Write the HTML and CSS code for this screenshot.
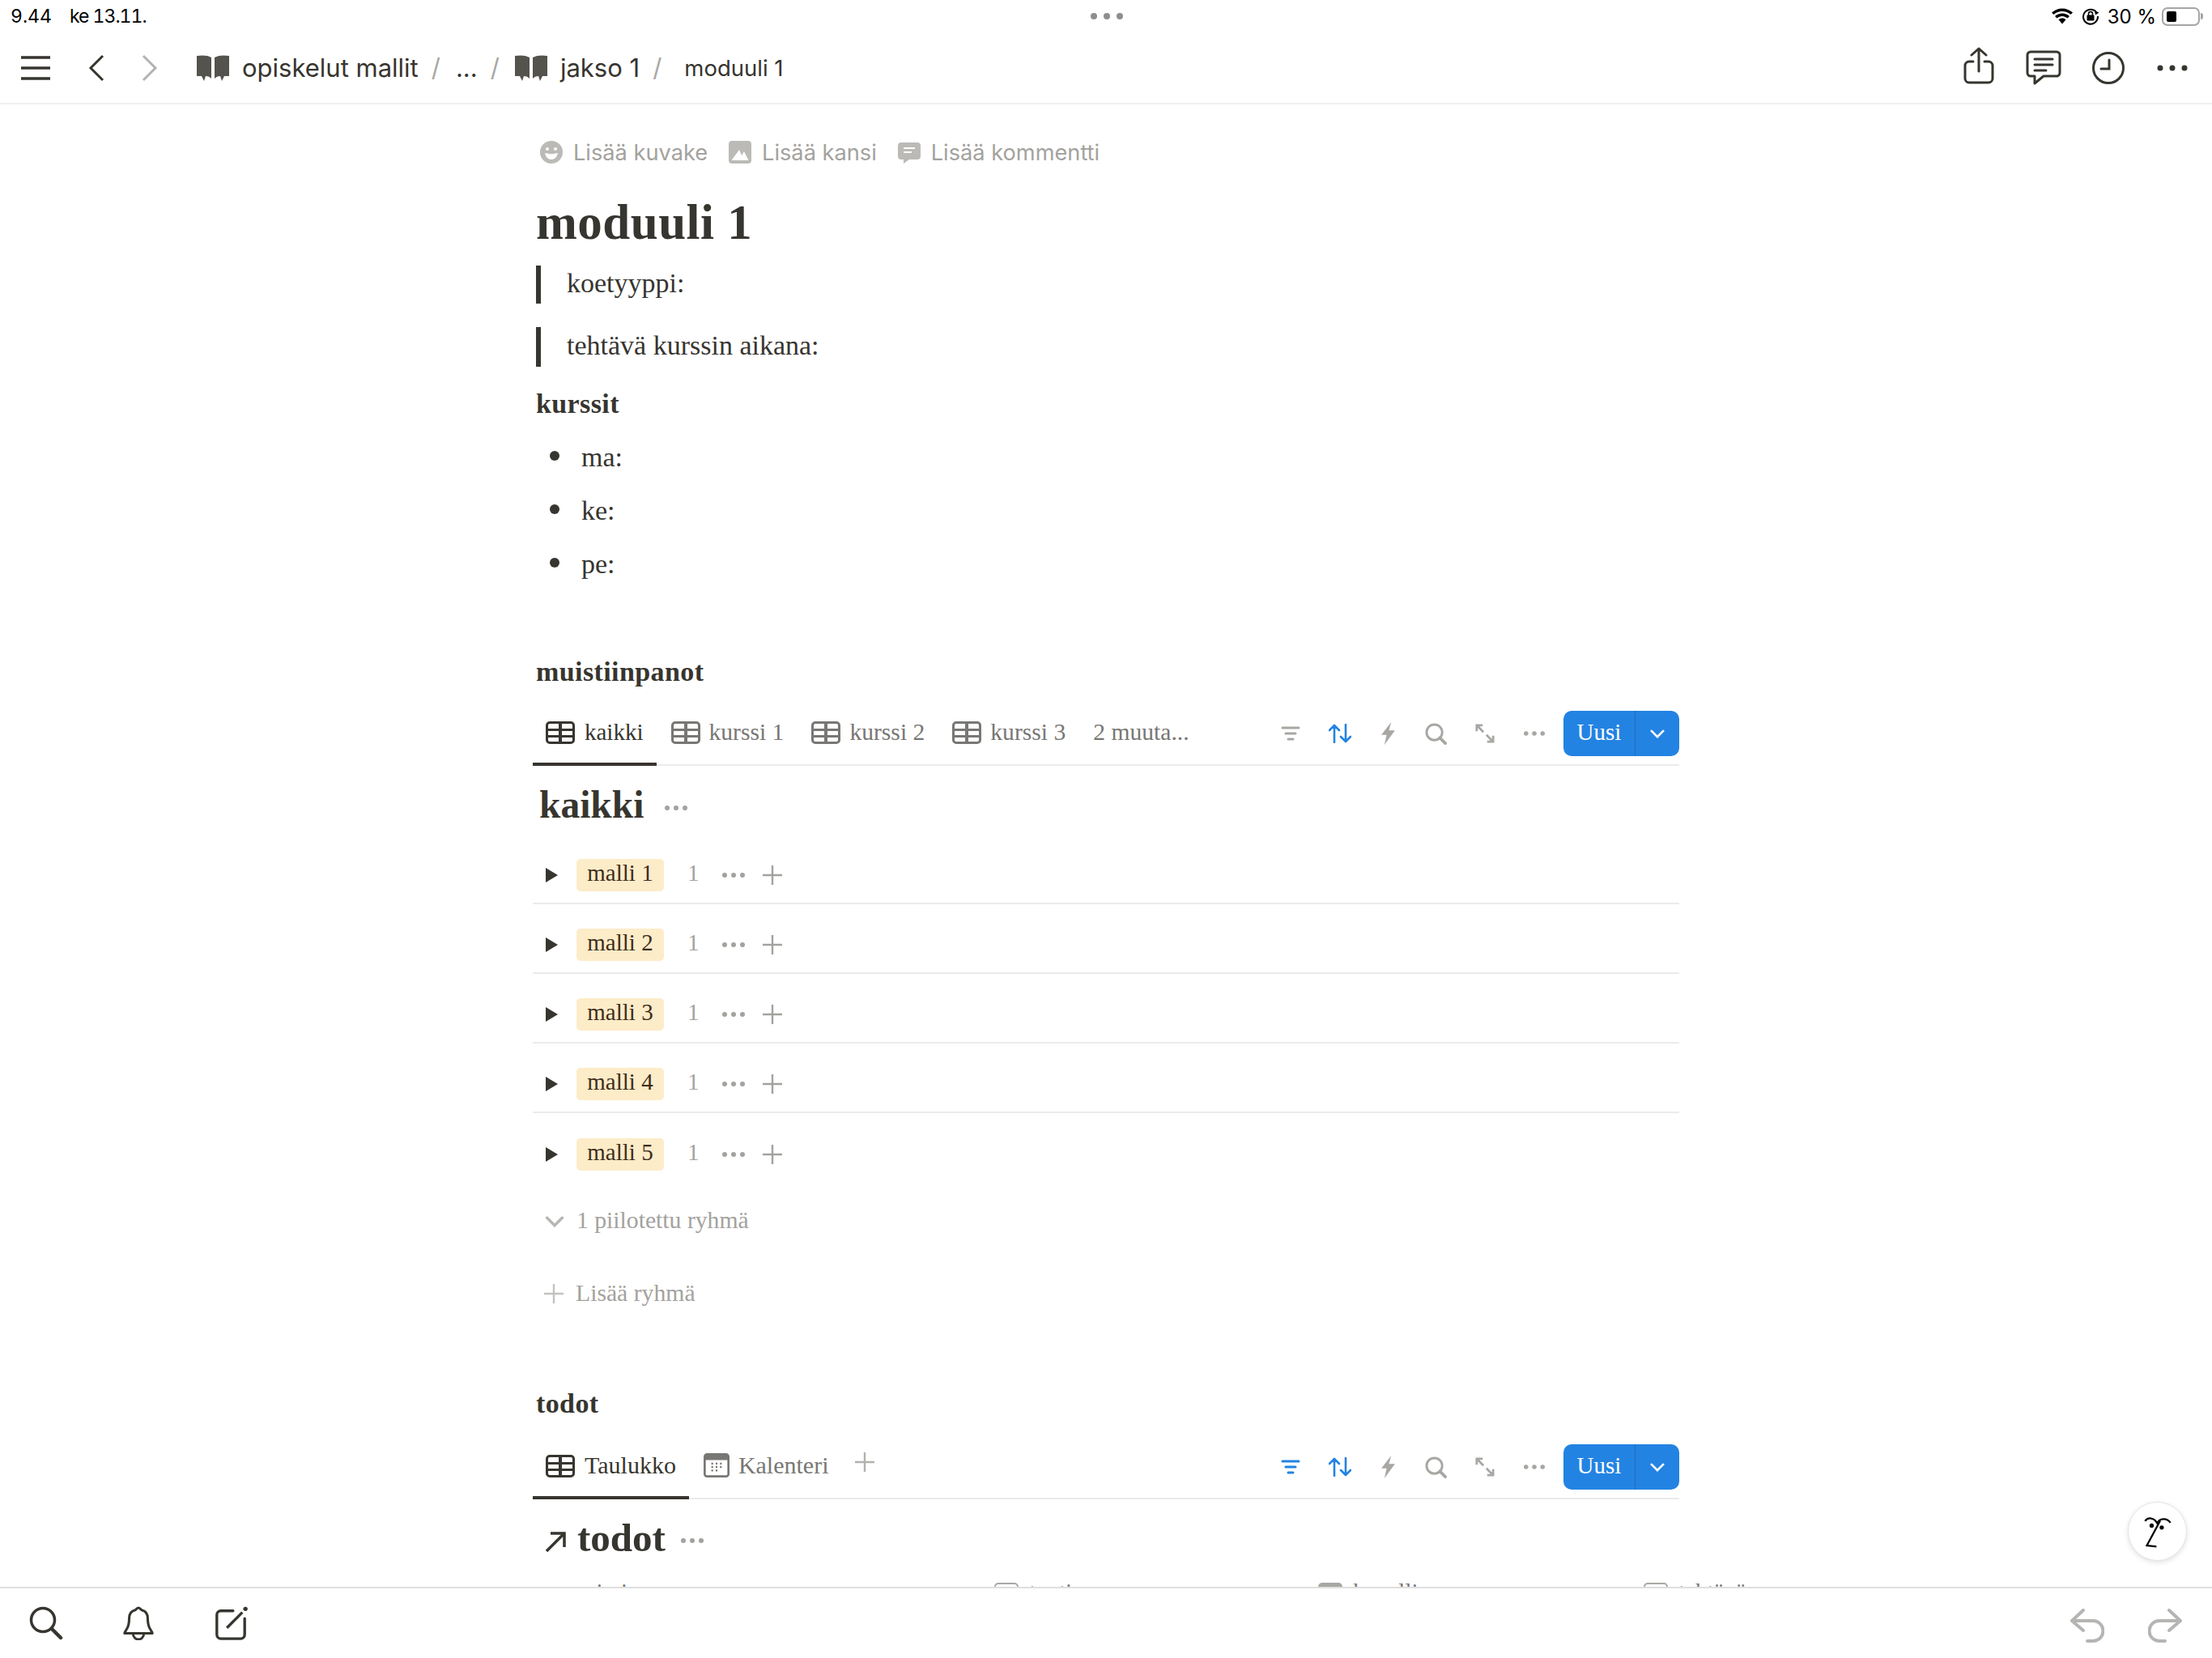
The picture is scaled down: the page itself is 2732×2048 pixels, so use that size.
FILE: index.html
```html
<!DOCTYPE html>
<html>
<head>
  <title>moduuli 1</title>
  <link rel="stylesheet" href="styles.css">
</head>
<body>
  <svg class="defs" xmlns="http://www.w3.org/2000/svg">
    <symbol id="table" viewBox="0 0 36 28">
      <path fill-rule="evenodd" d="M5 0h26a5 5 0 0 1 5 5v18a5 5 0 0 1-5 5H5a5 5 0 0 1-5-5V5a5 5 0 0 1 5-5zM3 9h13V3H5a2 2 0 0 0-2 2zm17 0h13V5a2 2 0 0 0-2-2H20zM3 12v5h13v-5zm17 0v5h13v-5zM3 20v3a2 2 0 0 0 2 2h11v-5zm17 0v5h11a2 2 0 0 0 2-2v-3z"/>
    </symbol>
    <symbol id="dots" viewBox="0 0 28 6">
      <circle cx="3" cy="3" r="3"/><circle cx="14" cy="3" r="3"/><circle cx="25" cy="3" r="3"/>
    </symbol>
    <symbol id="plus" viewBox="0 0 24 24">
      <path d="M12 0v24M0 12h24" fill="none" stroke="currentColor" stroke-width="2.4"/>
    </symbol>
    <symbol id="book" viewBox="0 0 40 32">
      <path d="M0 1c6-1 13-1 18 2v26c-2-2-4-3-7-3l-2 6-3-6H0zM40 1c-6-1-13-1-18 2v26c2-2 4-3 7-3l2 6 3-6h6z"/>
    </symbol>
    <symbol id="filter" viewBox="0 0 24 18">
      <path d="M2 2h20M6 9h12M9 16h6" fill="none" stroke="currentColor" stroke-width="3" stroke-linecap="round"/>
    </symbol>
    <symbol id="sort" viewBox="0 0 28 24">
      <path d="M7 23V2M1 8l6-6 6 6M21 1v21M15 16l6 6 6-6" fill="none" stroke="currentColor" stroke-width="2.6" stroke-linecap="round" stroke-linejoin="round"/>
    </symbol>
    <symbol id="bolt" viewBox="0 0 18 30">
      <path d="M13 0 0 17h7L4 30l14-19h-8z"/>
    </symbol>
    <symbol id="find" viewBox="0 0 28 28">
      <circle cx="12" cy="12" r="10" fill="none" stroke="currentColor" stroke-width="3"/>
      <path d="m19 19 7 7" fill="none" stroke="currentColor" stroke-width="4" stroke-linecap="round"/>
    </symbol>
    <symbol id="expand" viewBox="0 0 26 26">
      <path d="M2 10V2h8M2 2l9 9M24 16v8h-8M24 24l-9-9" fill="none" stroke="currentColor" stroke-width="3"/>
    </symbol>
    <symbol id="chev" viewBox="0 0 20 12">
      <path d="m2 2 8 8 8-8" fill="none" stroke="currentColor" stroke-width="3" stroke-linecap="round"/>
    </symbol>
  </svg>

  <div class="app">
    <div class="statusbar">
      <div class="status-time"><span>9.44</span><span class="status-date">ke 13.11.</span></div>
      <svg class="status-dots" viewBox="0 0 40 8" fill="#8e8e8e"><circle cx="4" cy="4" r="4"/><circle cx="20" cy="4" r="4"/><circle cx="36" cy="4" r="4"/></svg>
      <div class="status-right">
        <svg class="ic-wifi" viewBox="0 0 28 20"><path d="M14 4c4 0 7.5 1.5 10.500 4L27 5.500C23.500 2.500 19 .5 14 .5S4.500 2.500 1 5.500L3.500 8C6.500 5.500 10 4 14 4z"/><path d="M14 10c2.500 0 4.500 1 6.500 2.500L23 10c-2.500-2-5.500-3.500-9-3.500S7.500 8 5 10l2.500 2.500C9.500 11 11.500 10 14 10z"/><path d="M14 12.500c-1.800 0-3.200.6-4.500 1.700L14 19.500l4.500-5.300c-1.300-1.100-2.700-1.700-4.500-1.700z"/></svg>
        <svg class="ic-lock" viewBox="0 0 22 22"><path d="M19 7.500A9 9 0 1 0 20 11" fill="none" stroke="#000" stroke-width="2"/><path d="m21.500 6.500-4.500 3-1-5z"/><rect x="6.500" y="9.500" width="9" height="7" rx="1"/><path d="M8.500 10V8a2.500 2.500 0 0 1 5 0v2" fill="none" stroke="#000" stroke-width="1.500"/></svg>
        <span>30 %</span>
        <div class="battery"><div class="battery-fill"></div></div>
        <div class="battery-nub"></div>
      </div>
    </div>

    <header class="topbar">
      <svg class="ic-menu" viewBox="0 0 36 30"><path d="M0 2h36M0 15h36M0 28h36" stroke="#37352f" stroke-width="3.5"/></svg>
      <svg class="ic-nav" viewBox="0 0 20 34"><path d="M18 2 3 17l15 15" fill="none" stroke="#37352f" stroke-width="3"/></svg>
      <svg class="ic-nav ic-nav-off" viewBox="0 0 20 34"><path d="m2 2 15 15L2 32" fill="none" stroke="#b4b3b0" stroke-width="3"/></svg>
      <nav class="crumbs">
        <svg class="ic-book"><use href="#book"/></svg>
        <span class="crumb">opiskelut mallit</span>
        <span class="sep">/</span>
        <span class="crumb">...</span>
        <span class="sep">/</span>
        <svg class="ic-book"><use href="#book"/></svg>
        <span class="crumb">jakso 1</span>
        <span class="sep">/</span>
        <span class="crumb crumb-last">moduuli 1</span>
      </nav>
      <div class="top-actions">
        <svg class="ic-share" viewBox="0 0 38 46"><path d="M12 18H7a5 5 0 0 0-5 5v16a5 5 0 0 0 5 5h24a5 5 0 0 0 5-5V23a5 5 0 0 0-5-5h-5M19 30V2M10 10l9-8 9 8" fill="none" stroke="#37352f" stroke-width="3" stroke-linecap="round" stroke-linejoin="round"/></svg>
        <svg class="ic-comment" viewBox="0 0 44 44"><path d="M6 2h32a4 4 0 0 1 4 4v22a4 4 0 0 1-4 4H22l-11 9v-9H6a4 4 0 0 1-4-4V6a4 4 0 0 1 4-4z" fill="none" stroke="#37352f" stroke-width="3" stroke-linejoin="round"/><path d="M11 11h22M11 18h22M11 25h14" stroke="#37352f" stroke-width="3" stroke-linecap="round"/></svg>
        <svg class="ic-clock" viewBox="0 0 40 40"><circle cx="20" cy="20" r="18.5" fill="none" stroke="#37352f" stroke-width="3"/><path d="M21 10v11h-10" fill="none" stroke="#37352f" stroke-width="3" stroke-linecap="round"/></svg>
        <svg class="ic-more" fill="#37352f" viewBox="0 0 38 8"><circle cx="4" cy="4" r="3.5"/><circle cx="19" cy="4" r="3.5"/><circle cx="34" cy="4" r="3.5"/></svg>
      </div>
    </header>

    <main class="page">
      <div class="content">
        <div class="page-actions">
          <span class="page-action">
            <svg class="ic-action" viewBox="0 0 28 28"><path fill-rule="evenodd" d="M14 0a14 14 0 1 1 0 28 14 14 0 0 1 0-28zM9 8a2 2 0 1 0 0 4 2 2 0 0 0 0-4zm10 0a2 2 0 1 0 0 4 2 2 0 0 0 0-4zM6 15c1 5 4 8 8 8s7-3 8-8c-5 1.500-11 1.500-16 0z"/></svg>
            Lisää kuvake
          </span>
          <span class="page-action">
            <svg class="ic-action" viewBox="0 0 28 28"><path fill-rule="evenodd" d="M4 0h20a4 4 0 0 1 4 4v20a4 4 0 0 1-4 4H4a4 4 0 0 1-4-4V4a4 4 0 0 1 4-4zm-.5 24h21L19 13l-3 5-3-7z"/></svg>
            Lisää kansi
          </span>
          <span class="page-action">
            <svg class="ic-action" viewBox="0 0 28 28"><path fill-rule="evenodd" d="M4 2h20a4 4 0 0 1 4 4v13a4 4 0 0 1-4 4H14l-7 5v-5H4a4 4 0 0 1-4-4V6a4 4 0 0 1 4-4zm3 6v2h14V8zm0 5v2h10v-2z"/></svg>
            Lisää kommentti
          </span>
        </div>

        <h1 class="page-title">moduuli 1</h1>

        <div class="quote quote-first">koetyyppi:</div>
        <div class="quote quote-second">tehtävä kurssin aikana:</div>

        <h3 class="sub kurssit">kurssit</h3>
        <ul class="bullets">
          <li>ma:</li>
          <li>ke:</li>
          <li>pe:</li>
        </ul>

        <h3 class="sub notes">muistiinpanot</h3>
        <div class="tabs">
          <div class="tab active"><svg class="ic-table"><use href="#table"/></svg>kaikki</div>
          <div class="tab"><svg class="ic-table"><use href="#table"/></svg>kurssi 1</div>
          <div class="tab"><svg class="ic-table"><use href="#table"/></svg>kurssi 2</div>
          <div class="tab"><svg class="ic-table"><use href="#table"/></svg>kurssi 3</div>
          <div class="tab">2 muuta...</div>
          <div class="tools">
            <svg class="tool-filter"><use href="#filter"/></svg>
            <svg class="tool-sort"><use href="#sort"/></svg>
            <svg class="tool-bolt"><use href="#bolt"/></svg>
            <svg class="tool-find"><use href="#find"/></svg>
            <svg class="tool-expand"><use href="#expand"/></svg>
            <svg class="tool-dots"><use href="#dots"/></svg>
            <div class="new-btn"><span class="new-label">Uusi</span><span class="new-arrow"><svg class="ic-chev"><use href="#chev"/></svg></span></div>
          </div>
        </div>

        <div class="db-title">kaikki <svg class="title-dots"><use href="#dots"/></svg></div>

        <div class="groups">
          <div class="group">
            <span class="caret"></span><span class="pill">malli 1</span><span class="count">1</span>
            <svg class="group-dots"><use href="#dots"/></svg><svg class="group-plus"><use href="#plus"/></svg>
          </div>
          <div class="group">
            <span class="caret"></span><span class="pill">malli 2</span><span class="count">1</span>
            <svg class="group-dots"><use href="#dots"/></svg><svg class="group-plus"><use href="#plus"/></svg>
          </div>
          <div class="group">
            <span class="caret"></span><span class="pill">malli 3</span><span class="count">1</span>
            <svg class="group-dots"><use href="#dots"/></svg><svg class="group-plus"><use href="#plus"/></svg>
          </div>
          <div class="group">
            <span class="caret"></span><span class="pill">malli 4</span><span class="count">1</span>
            <svg class="group-dots"><use href="#dots"/></svg><svg class="group-plus"><use href="#plus"/></svg>
          </div>
          <div class="group">
            <span class="caret"></span><span class="pill">malli 5</span><span class="count">1</span>
            <svg class="group-dots"><use href="#dots"/></svg><svg class="group-plus"><use href="#plus"/></svg>
          </div>
        </div>

        <div class="muted-row hidden-groups"><svg class="ic-chev-muted"><use href="#chev"/></svg>1 piilotettu ryhmä</div>
        <div class="muted-row add-group"><svg class="ic-plus-muted"><use href="#plus"/></svg>Lisää ryhmä</div>

        <h3 class="sub todot">todot</h3>
        <div class="tabs tabs-todot">
          <div class="tab active"><svg class="ic-table"><use href="#table"/></svg>Taulukko</div>
          <div class="tab">
            <svg class="ic-cal" viewBox="0 0 30 28" fill="#787774"><path fill-rule="evenodd" d="M4 0h22a4 4 0 0 1 4 4v20a4 4 0 0 1-4 4H4a4 4 0 0 1-4-4V4a4 4 0 0 1 4-4zM2.500 8v16A1.500 1.500 0 0 0 4 25.500h22a1.500 1.500 0 0 0 1.500-1.500V8z"/><path d="M9 11h2v2H9zm5 0h2v2h-2zm5 0h2v2h-2zm-10 4h2v2H9zm5 0h2v2h-2zm5 0h2v2h-2zM9 19h2v2H9zm5 0h2v2h-2z"/></svg>
            Kalenteri
          </div>
          <svg class="tab-plus"><use href="#plus"/></svg>
          <div class="tools">
            <svg class="tool-filter tool-on"><use href="#filter"/></svg>
            <svg class="tool-sort"><use href="#sort"/></svg>
            <svg class="tool-bolt"><use href="#bolt"/></svg>
            <svg class="tool-find"><use href="#find"/></svg>
            <svg class="tool-expand"><use href="#expand"/></svg>
            <svg class="tool-dots"><use href="#dots"/></svg>
            <div class="new-btn"><span class="new-label">Uusi</span><span class="new-arrow"><svg class="ic-chev"><use href="#chev"/></svg></span></div>
          </div>
        </div>

        <div class="db-title db-title-todot">
          <svg class="ic-link" viewBox="0 0 28 28"><path d="M3 26 25 4M8 4h17v17" fill="none" stroke="#37352f" stroke-width="3.5"/></svg>
          todot <svg class="title-dots"><use href="#dots"/></svg>
        </div>

        <div class="table-head">
          <span class="col col-name"><span class="col-aa">Aa</span>nimi</span>
          <span class="col col-type"><span class="col-box col-box-line"></span>tunti</span>
          <span class="col col-date"><span class="col-box"></span>kuvallinen</span>
          <span class="col col-state"><span class="col-box col-box-line"></span>tehtävä</span>
        </div>
      </div>
      <button class="pencil">
        <svg viewBox="140 92 116 128"><path d="M150 116c10-15 34-15 46 8 10-21 36-21 50-2" fill="none" stroke="#000" stroke-width="7"/><path d="m207 115-50 93 36 4" fill="none" stroke="#000" stroke-width="7"/><circle cx="175" cy="133" r="8"/><circle cx="213" cy="140" r="8"/></svg>
      </button>
    </main>

    <footer class="bottombar">
      <svg class="ic-bottom" viewBox="0 0 42 42"><circle cx="17" cy="17" r="14.5" fill="none" stroke="#37352f" stroke-width="3.5"/><path d="m28 28 11 11" stroke="#37352f" stroke-width="4.5" stroke-linecap="round"/></svg>
      <svg class="ic-bottom" viewBox="0 0 42 44"><path d="M21 2c-2 0-3 2-4 3-5 1-8 5-8 11 0 8-1 11-4 15-1 2-2 3-2 4h36c0-1-1-2-2-4-3-4-4-7-4-15 0-6-3-10-8-11-1-1-2-3-4-3z" fill="none" stroke="#37352f" stroke-width="3.2" stroke-linejoin="round"/><path d="M14 36a7 7 0 0 0 14 0" fill="none" stroke="#37352f" stroke-width="3"/></svg>
      <svg class="ic-bottom" viewBox="0 0 42 44"><path d="M24 6H8a5 5 0 0 0-5 5v26a5 5 0 0 0 5 5h26a5 5 0 0 0 5-5V16" fill="none" stroke="#37352f" stroke-width="3.5" stroke-linecap="round"/><path d="m16 28 20-20" stroke="#37352f" stroke-width="3.5"/><circle cx="40" cy="3.5" r="2.8" fill="#37352f"/></svg>
      <div class="history">
        <svg class="ic-history" viewBox="0 0 42 42"><path d="M16 2 2 15l14 12M2 15h26a12 12 0 0 1 0 25h-7" fill="none" stroke="#b5b5b3" stroke-width="4" stroke-linecap="round" stroke-linejoin="round"/></svg>
        <svg class="ic-history" viewBox="0 0 42 42"><path d="m26 2 14 13-14 12M40 15H14a12 12 0 0 0 0 25h7" fill="none" stroke="#b5b5b3" stroke-width="4" stroke-linecap="round" stroke-linejoin="round"/></svg>
      </div>
    </footer>
  </div>
</body>
</html>
```

FILE: styles.css
```css
:root {
  --text: #37352f;
  --text-mid: #787774;
  --text-light: #a3a29e;
  --icon-light: #b2b1ad;
  --line: #ebebea;
  --blue: #2383e2;
  --serif: 'Liberation Serif', serif;
  --sans: 'Inter', 'Liberation Sans', sans-serif;
}

* {
  box-sizing: border-box;
  margin: 0;
  padding: 0;
}

body {
  width: 2732px;
  height: 2048px;
  overflow: hidden;
  background: #fff;
  color: var(--text);
  font-family: var(--serif);
}

.defs {
  display: none;
}

.app {
  display: flex;
  flex-direction: column;
  height: 2048px;
}

svg {
  display: block;
  flex: none;
}

/* Status bar */
.statusbar {
  height: 40px;
  display: flex;
  align-items: center;
  justify-content: space-between;
  padding: 0 11px 0 13px;
  color: #000;
  font-family: var(--sans);
  font-size: 23px;
}

.status-time {
  display: flex;
  gap: 22px;
  width: 800px;
  font-variant-numeric: tabular-nums;
}

.status-date {
  letter-spacing: -1px;
}

.status-dots {
  width: 40px;
  height: 8px;
}

.status-right {
  display: flex;
  align-items: center;
  justify-content: flex-end;
  width: 800px;
  font-size: 24px;
}

.ic-wifi {
  width: 28px;
  height: 20px;
  margin-right: 10px;
}

.ic-lock {
  width: 22px;
  height: 22px;
  margin-right: 10px;
}

.battery {
  width: 47px;
  height: 23px;
  margin-left: 7px;
  padding: 3px 4px;
  border: 2px solid #a5a5a5;
  border-radius: 7px;
}

.battery-fill {
  width: 12px;
  height: 13px;
  background: #000;
  border-radius: 2px;
}

.battery-nub {
  width: 3px;
  height: 8px;
  margin-left: 1px;
  background: #a5a5a5;
  border-radius: 0 3px 3px 0;
}

/* Top bar */
.topbar {
  height: 89px;
  display: flex;
  align-items: center;
  padding: 0 30px 0 26px;
  border-bottom: 2px solid #f0f0ef;
}

.ic-menu {
  width: 36px;
  height: 30px;
  margin-right: 47px;
}

.ic-nav {
  width: 20px;
  height: 34px;
  margin-right: 46px;
}

.ic-nav-off {
  margin-right: 48px;
}

.crumbs {
  display: flex;
  align-items: center;
  font-family: var(--sans);
  font-size: 31px;
}

.ic-book {
  width: 40px;
  height: 32px;
  fill: #55534e;
  margin-right: 16px;
}

.sep {
  color: #a9a8a5;
  margin: 0 19px 0 16px;
  font-size: 31px;
}

.crumb-last {
  font-size: 27.5px;
  margin-left: 9px;
}

.top-actions {
  margin-left: auto;
  display: flex;
  align-items: center;
}

.ic-share {
  width: 38px;
  height: 46px;
  margin: -6px 39px 0 0;
}

.ic-comment {
  width: 44px;
  height: 44px;
  margin-right: 38px;
}

.ic-clock {
  width: 40px;
  height: 40px;
  margin-right: 40px;
}

.ic-more {
  width: 38px;
  height: 8px;
}

/* Page */
.page {
  flex: 1;
  overflow: hidden;
  position: relative;
}

.content {
  width: 1416px;
  margin: 0 auto;
  padding-top: 39px;
}

.page-actions {
  height: 40px;
  display: flex;
  align-items: center;
  gap: 26px;
  padding-left: 9px;
  font-family: var(--sans);
  font-size: 27.2px;
  color: var(--text-light);
}

.page-action {
  display: flex;
  align-items: center;
  gap: 13px;
}

.ic-action {
  width: 28px;
  height: 28px;
  fill: #bbbab6;
}

.page-title {
  height: 70px;
  margin-top: 32px;
  padding-left: 4px;
  font-size: 61px;
  line-height: 70px;
  font-weight: 700;
  letter-spacing: 0.5px;
}

.quote {
  display: flex;
  align-items: center;
  margin-left: 4px;
  padding: 0 0 4px 32px;
  border-left: 6px solid var(--text);
  font-size: 34px;
}

.quote-first {
  height: 47px;
  margin-top: 18px;
}

.quote-second {
  height: 49px;
  margin-top: 29px;
}

.sub {
  height: 40px;
  padding-left: 4px;
  font-size: 34px;
  line-height: 40px;
  font-weight: 700;
  letter-spacing: 0.4px;
}

.kurssit {
  margin-top: 26px;
}

.notes {
  margin-top: 80px;
}

.todot {
  margin-top: 97px;
}

.bullets {
  list-style: none;
  margin-top: 13px;
}

.bullets li {
  height: 66px;
  display: flex;
  align-items: center;
  padding-left: 60px;
  font-size: 34px;
  position: relative;
}

.bullets li::before {
  content: "";
  position: absolute;
  left: 21px;
  top: 25px;
  width: 12px;
  height: 12px;
  border-radius: 50%;
  background: var(--text);
}

/* Database tabs */
.tabs {
  height: 68px;
  margin-top: 28px;
  display: flex;
  border-bottom: 2px solid var(--line);
}

.tabs-todot {
  margin-top: 30px;
}

.tab {
  height: 68px;
  display: flex;
  align-items: flex-start;
  padding: 8px 16px 0;
  gap: 11px;
  margin-right: 2px;
  font-size: 29.6px;
  line-height: 36px;
  color: var(--text-mid);
}

.tab.active {
  gap: 12px;
  color: var(--text);
  font-size: 29px;
  border-bottom: 4px solid var(--text);
}

.tabs-todot .tab {
  font-size: 30px;
}

.ic-table {
  width: 36px;
  height: 28px;
  margin-top: 5px;
  fill: var(--text-mid);
}

.active .ic-table {
  fill: var(--text);
}

.ic-cal {
  width: 32px;
  height: 30px;
  margin-top: 3px;
}

.tab-plus {
  width: 24px;
  height: 24px;
  margin: 10px 0 0 14px;
  color: var(--icon-light);
}

.tools {
  margin-left: auto;
  height: 56px;
  display: flex;
  align-items: center;
  color: #a8a7a3;
  fill: #a8a7a3;
}

.tool-filter {
  width: 24px;
  height: 18px;
  margin-right: 35px;
}

.tool-sort {
  width: 28px;
  height: 24px;
  margin-right: 36px;
  color: var(--blue);
}

.tool-on {
  color: var(--blue);
}

.tool-bolt {
  width: 19px;
  height: 28px;
  margin-right: 36px;
}

.tool-find {
  width: 27px;
  height: 27px;
  margin-right: 35px;
}

.tool-expand {
  width: 24px;
  height: 24px;
  margin-right: 36px;
}

.tool-dots {
  width: 26px;
  height: 6px;
  margin-right: 23px;
}

.new-btn {
  width: 143px;
  height: 56px;
  display: flex;
  background: var(--blue);
  border-radius: 10px;
  color: #fff;
  font-size: 29px;
}

.new-label {
  width: 89px;
  display: flex;
  align-items: center;
  justify-content: center;
  padding-bottom: 4px;
  border-right: 1px solid #1b6dbd;
}

.new-arrow {
  flex: 1;
  display: flex;
  align-items: center;
  justify-content: center;
}

.ic-chev {
  width: 18px;
  height: 11px;
}

/* Titles */
.db-title {
  height: 60px;
  margin-top: 18px;
  padding-left: 8px;
  display: flex;
  align-items: center;
  gap: 26px;
  font-size: 47.5px;
  font-weight: 700;
}

.db-title-todot {
  margin-top: 17px;
  gap: 13px;
  padding-left: 14px;
  font-size: 49px;
}

.ic-link {
  width: 28px;
  height: 28px;
  margin-top: 10px;
}

.title-dots {
  width: 28px;
  height: 6px;
  margin-top: 8px;
  fill: var(--text-light);
}

.db-title-todot .title-dots {
  margin-left: 6px;
}

/* Groups */
.groups {
  margin-top: 7px;
}

.group {
  height: 86px;
  padding: 30px 0 14px 16px;
  display: flex;
  align-items: center;
  border-bottom: 2px solid var(--line);
}

.group:last-child {
  border-bottom: none;
}

.caret {
  width: 0;
  height: 0;
  border-left: 15px solid var(--text);
  border-top: 9px solid transparent;
  border-bottom: 9px solid transparent;
  margin-right: 23px;
}

.pill {
  width: 108px;
  height: 40px;
  border-radius: 5px;
  background: #fdecc8;
  color: #402c1b;
  font-size: 29px;
  line-height: 34px;
  text-align: center;
}

.count {
  width: 16px;
  margin: -6px 0 0 29px;
  font-size: 29px;
  color: var(--text-light);
}

.group-dots {
  width: 28px;
  height: 6px;
  margin-left: 27px;
  fill: var(--text-light);
}

.group-plus {
  width: 24px;
  height: 24px;
  margin-left: 22px;
  color: var(--text-light);
}

.muted-row {
  height: 40px;
  display: flex;
  align-items: center;
  color: var(--text-light);
  font-size: 29.7px;
}

.hidden-groups {
  margin-top: 26px;
}

.add-group {
  margin-top: 50px;
}

.ic-chev-muted {
  width: 24px;
  height: 14px;
  margin: 4px 15px 0 15px;
  color: #b7b6b2;
}

.ic-plus-muted {
  width: 24px;
  height: 24px;
  margin: 2px 15px 0 14px;
  color: #c3c2be;
}

/* Table header, cut off by the bottom bar */
.table-head {
  height: 50px;
  margin-top: 19px;
  display: flex;
  font-size: 29px;
  line-height: 36px;
  color: var(--text-mid);
}

.col {
  display: flex;
  gap: 13px;
  flex: none;
}

.col-name {
  width: 570px;
  padding-left: 17px;
  gap: 19px;
}

.col-aa {
  padding-top: 3px;
  font-size: 24px;
  color: var(--text-light);
}

.col-type {
  width: 400px;
}

.col-date {
  width: 402px;
}

.col-box {
  width: 30px;
  height: 28px;
  margin-top: 7px;
  background: #a8a7a3;
  border-radius: 5px;
}

.col-box-line {
  background: none;
  border: 2px solid #a8a7a3;
}

/* Scribble button */
.pencil {
  position: absolute;
  left: 2628px;
  top: 1726px;
  width: 73px;
  height: 73px;
  display: flex;
  align-items: center;
  justify-content: center;
  background: #fff;
  border: 1px solid #e4e4e4;
  border-radius: 50%;
  box-shadow: 0 2px 6px rgba(0, 0, 0, 0.12);
}

.pencil svg {
  width: 38px;
  height: 42px;
}

/* Bottom bar */
.bottombar {
  position: relative;
  height: 88px;
  display: flex;
  align-items: center;
  padding: 0 37px 0 36px;
  gap: 72px;
  border-top: 2px solid #dfdfdf;
  background: #fff;
}

.ic-bottom {
  width: 42px;
  height: 42px;
}

.history {
  margin: 5px 0 0 auto;
  display: flex;
  gap: 54px;
}

.ic-history {
  width: 42px;
  height: 42px;
}
```
